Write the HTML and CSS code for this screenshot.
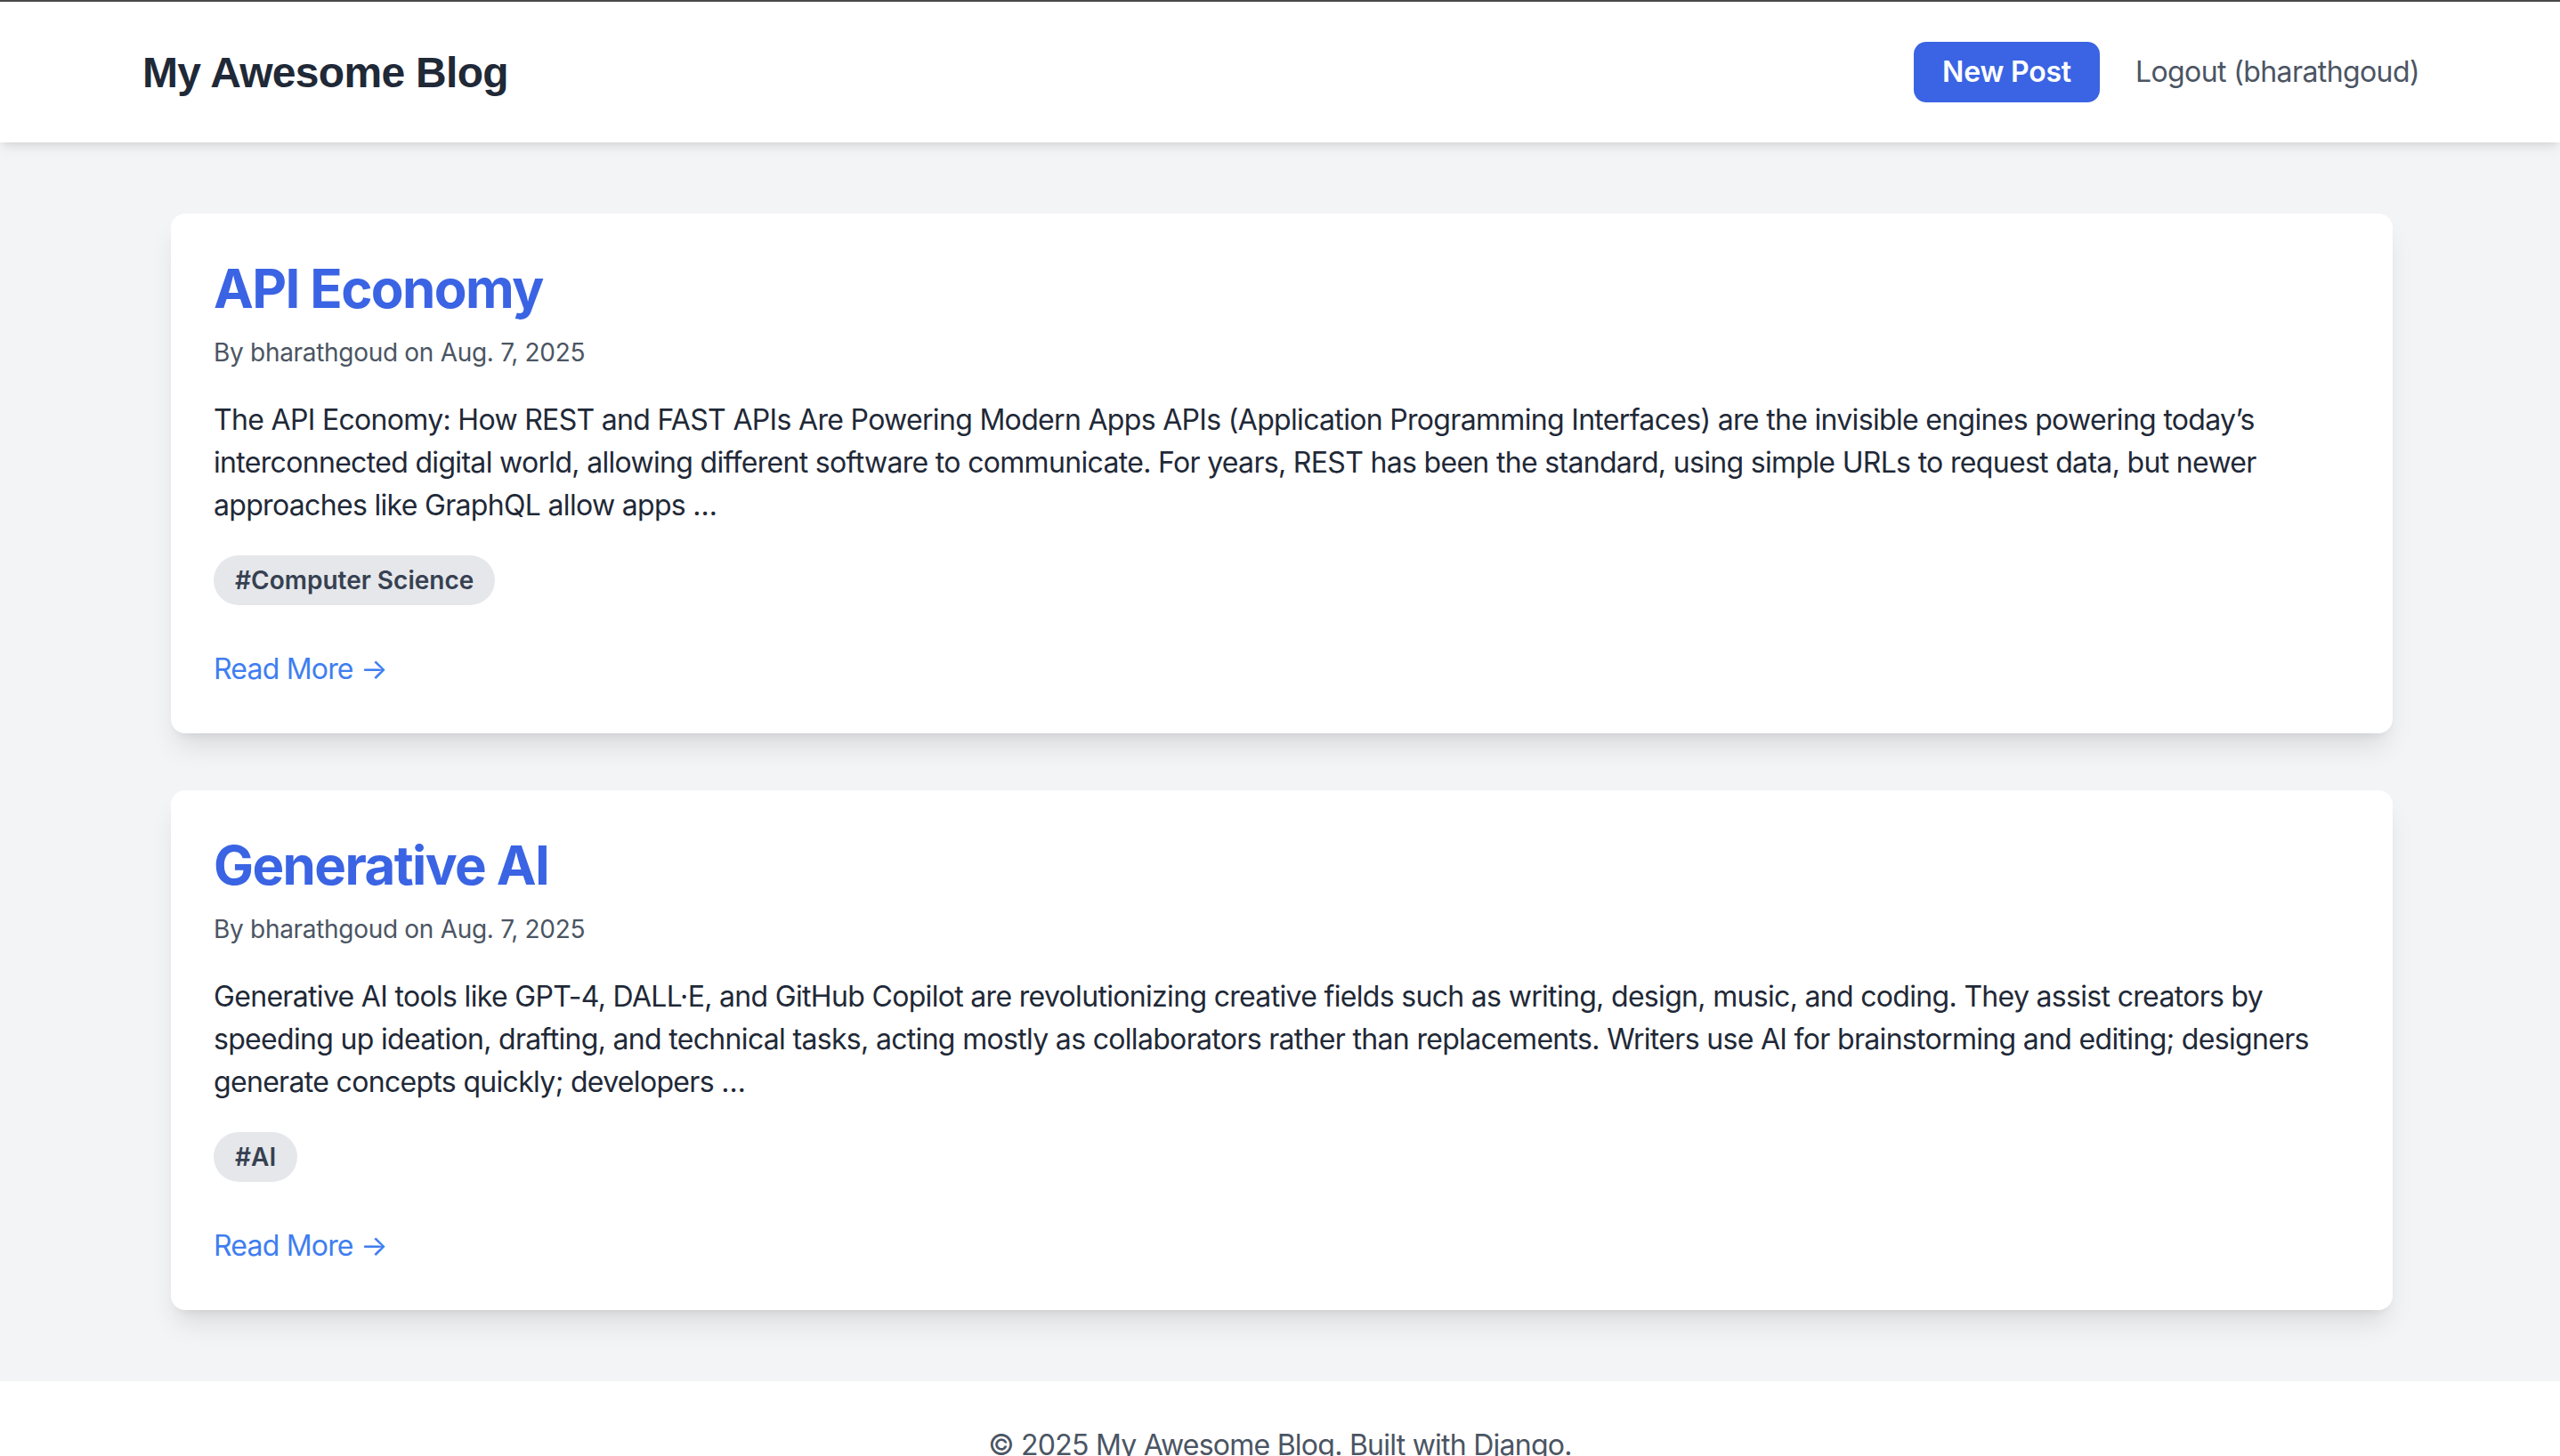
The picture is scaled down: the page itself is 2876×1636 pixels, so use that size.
FILE: index.html
```html
<!DOCTYPE html>
<html lang="en">
<head>
<meta charset="utf-8">
<title>My Awesome Blog</title>
<link rel="stylesheet" href="styles.css">
</head>
<body>
<header class="site-header">
  <div class="header-inner">
    <a class="brand" href="#">My Awesome Blog</a>
    <nav class="nav">
      <a class="btn-new" href="#">New Post</a>
      <a class="logout" href="#">Logout (bharathgoud)</a>
    </nav>
  </div>
</header>
<main class="main">
  <article class="card">
    <h2 class="post-title">API Economy</h2>
    <p class="meta">By bharathgoud on Aug. 7, 2025</p>
    <p class="excerpt">The API Economy: How REST and FAST APIs Are Powering Modern Apps APIs (Application Programming Interfaces) are the invisible engines powering today’s interconnected digital world, allowing different software to communicate. For years, REST has been the standard, using simple URLs to request data, but newer approaches like GraphQL allow apps …</p>
    <div class="tags"><span class="tag">#Computer Science</span></div>
    <div class="more"><a class="read-more" href="#">Read More →</a></div>
  </article>
  <article class="card">
    <h2 class="post-title">Generative AI</h2>
    <p class="meta">By bharathgoud on Aug. 7, 2025</p>
    <p class="excerpt">Generative AI tools like GPT-4, DALL·E, and GitHub Copilot are revolutionizing creative fields such as writing, design, music, and coding. They assist creators by speeding up ideation, drafting, and technical tasks, acting mostly as collaborators rather than replacements. Writers use AI for brainstorming and editing; designers generate concepts quickly; developers …</p>
    <div class="tags"><span class="tag">#AI</span></div>
    <div class="more"><a class="read-more" href="#">Read More →</a></div>
  </article>
</main>
<footer class="site-footer">
  <p class="footer-text">© 2025 My Awesome Blog. Built with Django.</p>
</footer>
</body>
</html>
```
FILE: styles.css
```css
* { box-sizing: border-box; }
html, body { margin: 0; padding: 0; }
body {
  font-family: Inter, "Noto Sans", sans-serif;
  background: #f3f4f6;
  color: #1f2937;
  border-top: 2px solid #4a4a4a;
}
a { text-decoration: none; }
p, h2 { margin: 0; }

.site-header {
  background: #fff;
  box-shadow: 0 8px 12px -2px rgba(0,0,0,0.08), 0 4px 8px -4px rgba(0,0,0,0.08);
  position: relative;
}
.header-inner {
  width: 2560px;
  margin: 0 auto;
  height: 158px;
  display: flex;
  align-items: center;
  justify-content: space-between;
}
.brand {
  font-family: "Liberation Sans", Arial, sans-serif;
  font-weight: 700;
  font-size: 48px;
  line-height: 64px;
  color: #1f2937;
  margin-top: 2px;
  margin-left: 2px;
  letter-spacing: -0.7px;
}
.nav {
  display: flex;
  align-items: center;
  gap: 40px;
}
.btn-new {
  background: #3a64e3;
  color: #fff;
  font-weight: 600;
  font-size: 32px;
  line-height: 48px;
  padding: 10px 32px;
  border-radius: 14px;
  letter-spacing: -0.2px;
}
.logout {
  color: #4b5563;
  font-size: 32px;
  line-height: 48px;
  letter-spacing: -0.6px;
}

.main {
  width: 2560px;
  margin: 0 auto;
  padding: 80px 30px 80px 34px;
  display: flex;
  flex-direction: column;
  gap: 64px;
}
.card {
  background: #fff;
  border-radius: 16px;
  padding: 48px;
  box-shadow: 0 20px 30px -6px rgba(0,0,0,0.1), 0 8px 12px -8px rgba(0,0,0,0.1);
}
.post-title {
  font-size: 60px;
  line-height: 72px;
  font-weight: 700;
  color: #3a64e3;
  letter-spacing: -1.6px;
}
.meta {
  margin-top: 16px;
  font-size: 28px;
  line-height: 40px;
  color: #4b5563;
  letter-spacing: -0.3px;
}
.excerpt {
  margin-top: 32px;
  font-size: 32px;
  line-height: 48px;
  color: #1f2937;
  letter-spacing: -0.68px;
}
.tags {
  margin-top: 32px;
  display: flex;
  gap: 16px;
}
.tag {
  background: #e5e7eb;
  color: #374151;
  font-size: 28px;
  line-height: 40px;
  font-weight: 600;
  padding: 8px 24px;
  border-radius: 9999px;
  letter-spacing: 0;
}
.more { margin-top: 48px; }
.read-more {
  color: #3f7ef0;
  font-size: 32px;
  line-height: 48px;
  letter-spacing: -0.8px;
}

.site-footer {
  background: #fff;
  padding: 48px 0;
}
.footer-text {
  text-align: center;
  color: #4b5563;
  font-size: 32px;
  line-height: 48px;
  letter-spacing: -0.75px;
}
```
